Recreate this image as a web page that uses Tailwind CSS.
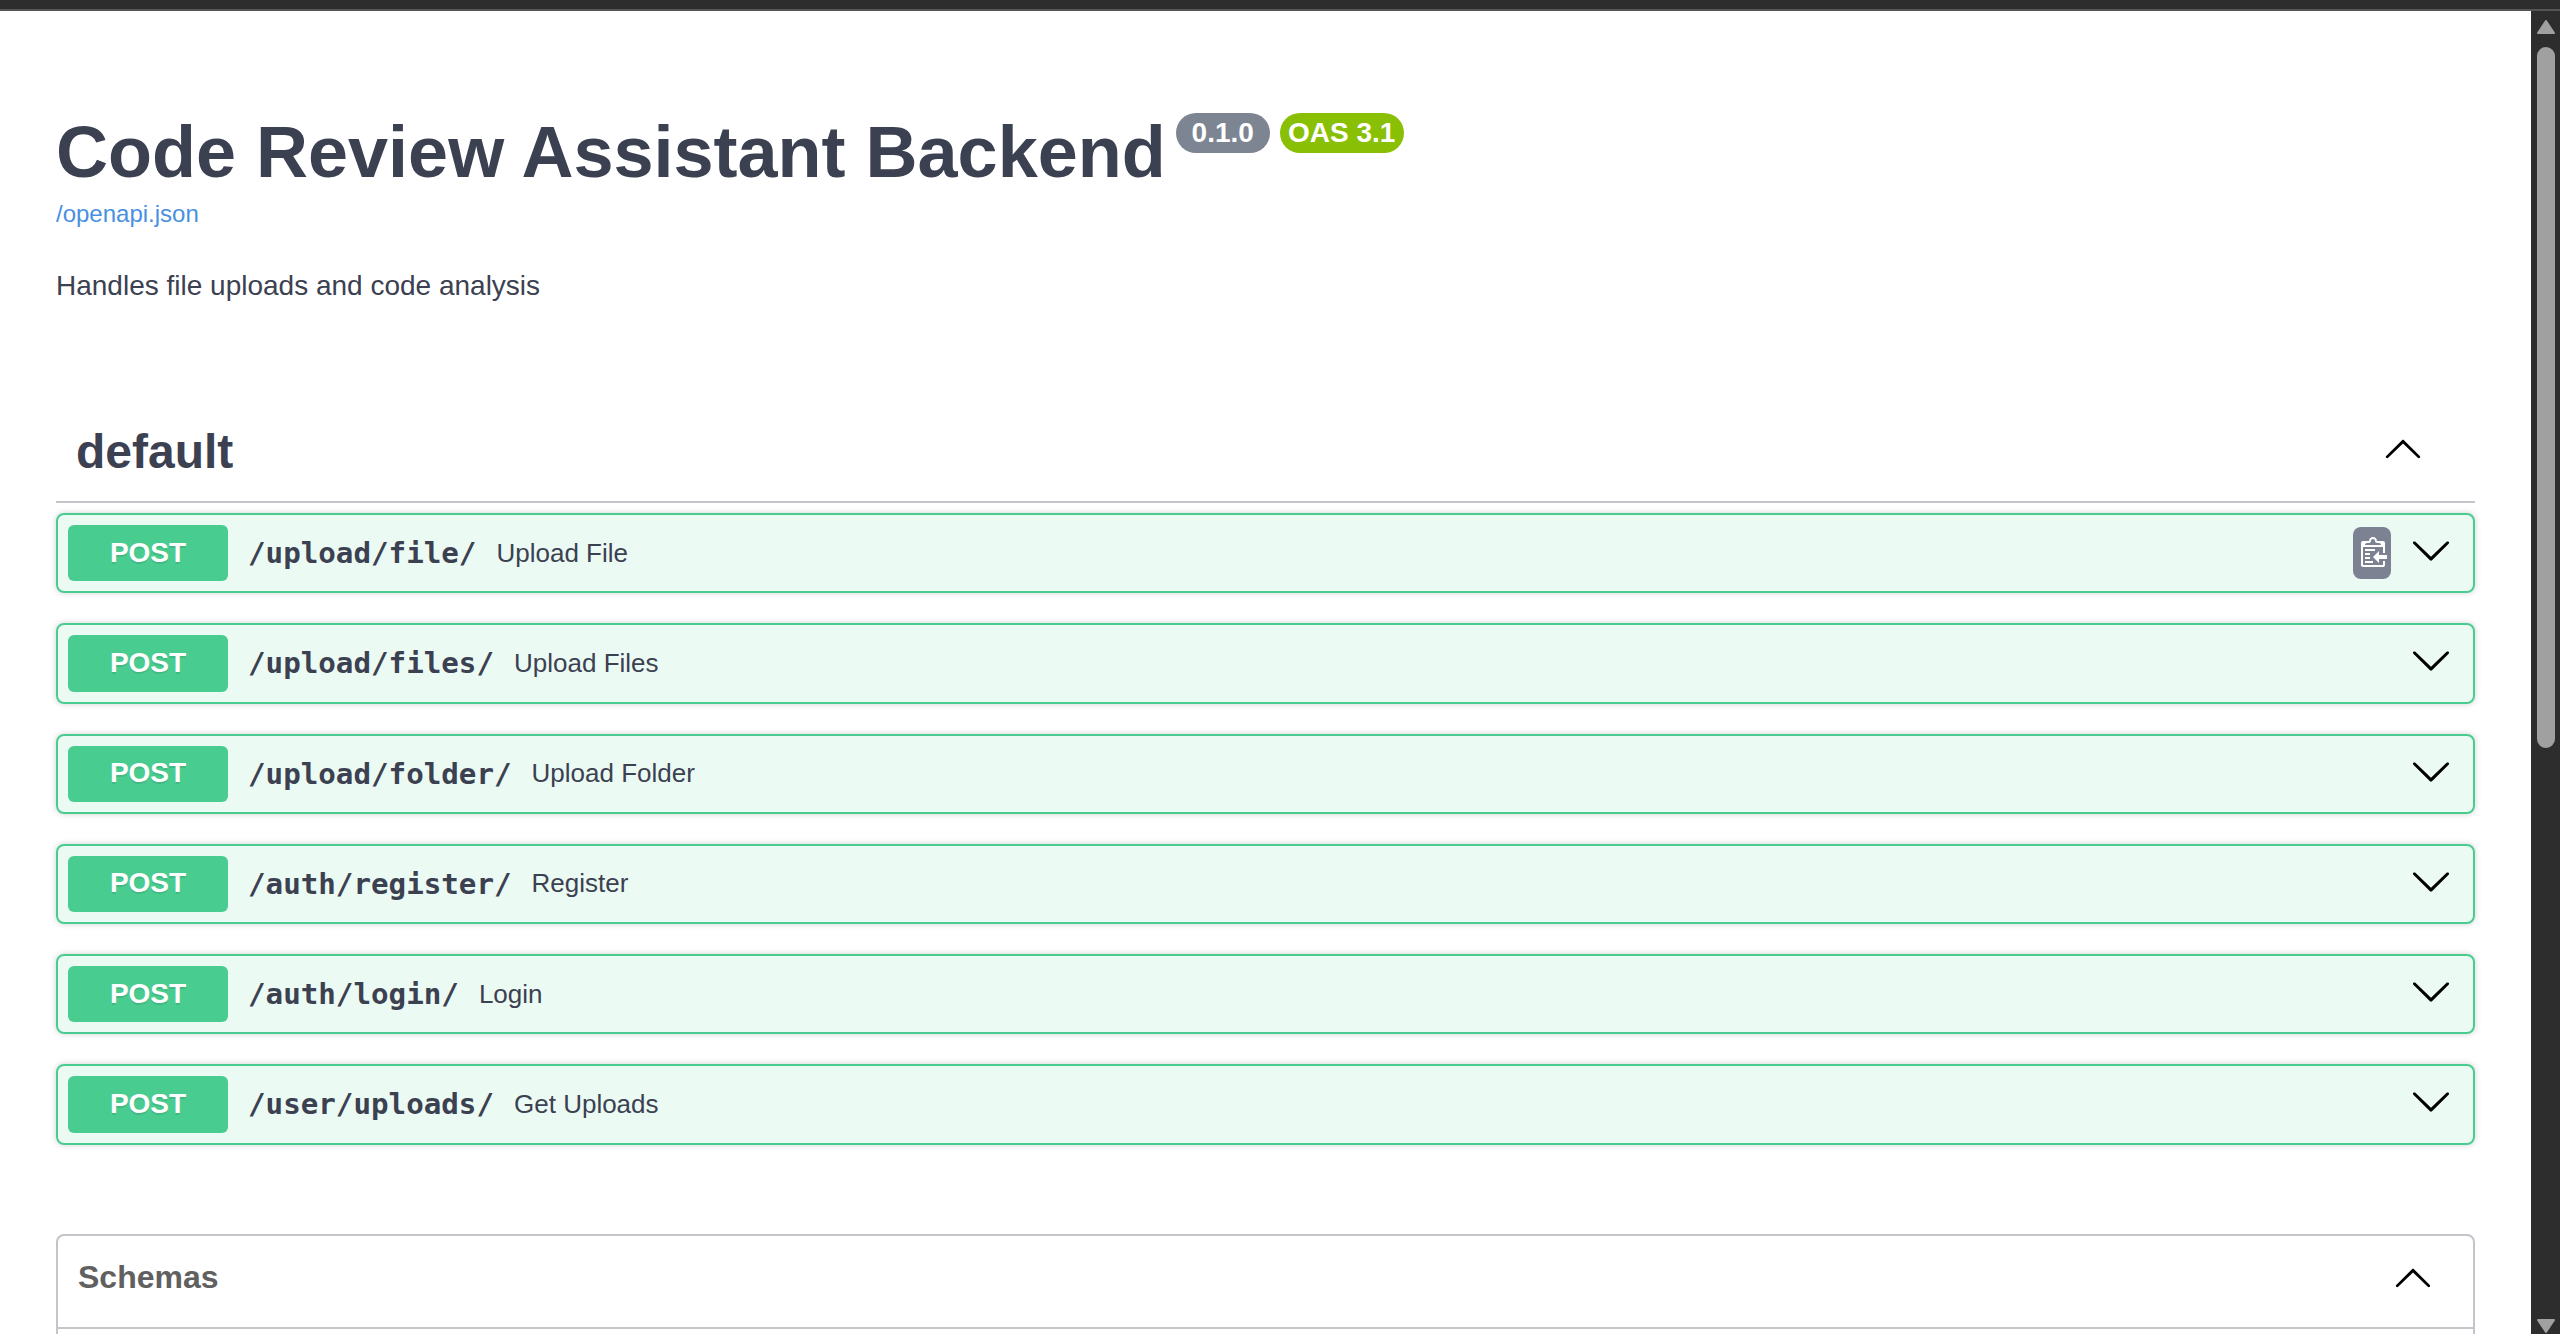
<!doctype html>
<html>
<head>
<meta charset="utf-8">
<script src="https://cdn.jsdelivr.net/npm/@tailwindcss/browser@4"></script>
<title>Code Review Assistant Backend</title>
</head>
<body class="h-[1334px] overflow-hidden bg-white font-['Liberation_Sans',sans-serif] text-[#3b4151]">
<div class="flex h-full flex-col">
  <div class="h-[9px] shrink-0 bg-[#2d2d2d]"></div>
  <div class="h-[2px] shrink-0 bg-[#555555]"></div>
  <div class="flex min-h-0 flex-1">
    <main class="min-w-0 flex-1 overflow-hidden pl-[56px] pr-[56px]">
      <div class="flex items-start pt-[96px]">
        <h1 class="text-[72px] leading-[90px] font-bold whitespace-nowrap">Code Review Assistant Backend</h1>
        <span class="ml-[10px] mt-[6px] flex h-[40px] w-[94px] items-center justify-center rounded-[20px] bg-[#7d8492] text-[28px] font-bold text-white">0.1.0</span>
        <span class="ml-[10px] mt-[6px] flex h-[40px] w-[124px] items-center justify-center rounded-[20px] bg-[#89bf04] text-[28px] font-bold text-white">OAS 3.1</span>
      </div>
      <a class="mt-[3px] block text-[24px] leading-[28px] text-[#4990e2]">/openapi.json</a>
      <p class="mt-[42px] text-[28px] leading-[32px]">Handles file uploads and code analysis</p>

      <div class="mt-[97px] flex h-[104px] items-center border-b-2 border-[#c4c5ca] pl-[20px]">
        <h3 class="pt-[3px] text-[48px] font-bold">default</h3>
        <svg class="ml-auto mr-[52px] h-[40px] w-[40px] -translate-y-[2px]" viewBox="0 0 20 20" fill="#000"><path d="M17.418 14.908c.272.268.709.268.979 0s.271-.701 0-.969l-7.908-7.83c-.27-.268-.707-.268-.979 0l-7.908 7.83c-.27.268-.27.701 0 .969.271.268.709.268.979 0L10 7.767l7.418 7.141z"/></svg>
      </div>

      <div class="mt-[10px] flex flex-col gap-[30px]">
        <div class="flex h-[80.25px] items-center rounded-[8px] border-2 border-[#49cc90] bg-[#49cc90]/10 px-[10px] shadow-[0_0_6px_rgba(0,0,0,0.19)]">
          <span class="flex h-[56.25px] w-[160px] shrink-0 items-center justify-center rounded-[6px] bg-[#49cc90] pb-[1px] text-[28px] font-bold text-white [text-shadow:0_2px_0_rgba(0,0,0,0.1)]">POST</span>
          <span class="ml-[20px] pt-[2px] font-['DejaVu_Sans_Mono',monospace] text-[29.2px] font-bold">/upload/file/</span>
          <span class="ml-[20px] text-[26px]">Upload File</span>
          <span class="ml-auto flex h-[52px] w-[38px] items-center justify-center rounded-[8px] bg-[#7d8293]">
            <svg class="h-[32px] w-[30px]" viewBox="0 0 15 16"><g transform="translate(2,-1)"><path fill="#ffffff" fill-rule="evenodd" d="M2 13h4v1H2v-1zm5-6H2v1h5V7zm2 3V8l-3 3 3 3v-2h5v-2H9zM4.5 9H2v1h2.5V9zM2 12h2.5v-1H2v1zm9 1h1v2c-.02.28-.11.52-.3.7-.19.18-.42.28-.7.3H1c-.55 0-1-.45-1-1V4c0-.55.45-1 1-1h3c0-1.11.89-2 2-2 1.11 0 2 .89 2 2h3c.55 0 1 .45 1 1v5h-1V6H1v9h10v-2zM2 5h8c0-.55-.45-1-1-1H8c-.55 0-1-.45-1-1s-.45-1-1-1-1 .45-1 1-.45 1-1 1H3c-.55 0-1 .45-1 1z"/></g></svg>
          </span>
          <svg class="ml-[19px] mr-[11px] h-[42px] w-[42px] -translate-y-[3px]" viewBox="0 0 20 20" fill="#000"><path d="M17.418 6.109c.272-.268.709-.268.979 0s.271.701 0 .969l-7.908 7.83c-.27.268-.707.268-.979 0l-7.908-7.83c-.27-.268-.27-.701 0-.969.271-.268.709-.268.979 0L10 13.25l7.418-7.141z"/></svg>
        </div>
        <div class="flex h-[80.25px] items-center rounded-[8px] border-2 border-[#49cc90] bg-[#49cc90]/10 px-[10px] shadow-[0_0_6px_rgba(0,0,0,0.19)]">
          <span class="flex h-[56.25px] w-[160px] shrink-0 items-center justify-center rounded-[6px] bg-[#49cc90] pb-[1px] text-[28px] font-bold text-white [text-shadow:0_2px_0_rgba(0,0,0,0.1)]">POST</span>
          <span class="ml-[20px] pt-[2px] font-['DejaVu_Sans_Mono',monospace] text-[29.2px] font-bold">/upload/files/</span>
          <span class="ml-[20px] text-[26px]">Upload Files</span>
          <svg class="ml-auto mr-[11px] h-[42px] w-[42px] -translate-y-[3px]" viewBox="0 0 20 20" fill="#000"><path d="M17.418 6.109c.272-.268.709-.268.979 0s.271.701 0 .969l-7.908 7.83c-.27.268-.707.268-.979 0l-7.908-7.83c-.27-.268-.27-.701 0-.969.271-.268.709-.268.979 0L10 13.25l7.418-7.141z"/></svg>
        </div>
        <div class="flex h-[80.25px] items-center rounded-[8px] border-2 border-[#49cc90] bg-[#49cc90]/10 px-[10px] shadow-[0_0_6px_rgba(0,0,0,0.19)]">
          <span class="flex h-[56.25px] w-[160px] shrink-0 items-center justify-center rounded-[6px] bg-[#49cc90] pb-[1px] text-[28px] font-bold text-white [text-shadow:0_2px_0_rgba(0,0,0,0.1)]">POST</span>
          <span class="ml-[20px] pt-[2px] font-['DejaVu_Sans_Mono',monospace] text-[29.2px] font-bold">/upload/folder/</span>
          <span class="ml-[20px] text-[26px]">Upload Folder</span>
          <svg class="ml-auto mr-[11px] h-[42px] w-[42px] -translate-y-[3px]" viewBox="0 0 20 20" fill="#000"><path d="M17.418 6.109c.272-.268.709-.268.979 0s.271.701 0 .969l-7.908 7.83c-.27.268-.707.268-.979 0l-7.908-7.83c-.27-.268-.27-.701 0-.969.271-.268.709-.268.979 0L10 13.25l7.418-7.141z"/></svg>
        </div>
        <div class="flex h-[80.25px] items-center rounded-[8px] border-2 border-[#49cc90] bg-[#49cc90]/10 px-[10px] shadow-[0_0_6px_rgba(0,0,0,0.19)]">
          <span class="flex h-[56.25px] w-[160px] shrink-0 items-center justify-center rounded-[6px] bg-[#49cc90] pb-[1px] text-[28px] font-bold text-white [text-shadow:0_2px_0_rgba(0,0,0,0.1)]">POST</span>
          <span class="ml-[20px] pt-[2px] font-['DejaVu_Sans_Mono',monospace] text-[29.2px] font-bold">/auth/register/</span>
          <span class="ml-[20px] text-[26px]">Register</span>
          <svg class="ml-auto mr-[11px] h-[42px] w-[42px] -translate-y-[3px]" viewBox="0 0 20 20" fill="#000"><path d="M17.418 6.109c.272-.268.709-.268.979 0s.271.701 0 .969l-7.908 7.83c-.27.268-.707.268-.979 0l-7.908-7.83c-.27-.268-.27-.701 0-.969.271-.268.709-.268.979 0L10 13.25l7.418-7.141z"/></svg>
        </div>
        <div class="flex h-[80.25px] items-center rounded-[8px] border-2 border-[#49cc90] bg-[#49cc90]/10 px-[10px] shadow-[0_0_6px_rgba(0,0,0,0.19)]">
          <span class="flex h-[56.25px] w-[160px] shrink-0 items-center justify-center rounded-[6px] bg-[#49cc90] pb-[1px] text-[28px] font-bold text-white [text-shadow:0_2px_0_rgba(0,0,0,0.1)]">POST</span>
          <span class="ml-[20px] pt-[2px] font-['DejaVu_Sans_Mono',monospace] text-[29.2px] font-bold">/auth/login/</span>
          <span class="ml-[20px] text-[26px]">Login</span>
          <svg class="ml-auto mr-[11px] h-[42px] w-[42px] -translate-y-[3px]" viewBox="0 0 20 20" fill="#000"><path d="M17.418 6.109c.272-.268.709-.268.979 0s.271.701 0 .969l-7.908 7.83c-.27.268-.707.268-.979 0l-7.908-7.83c-.27-.268-.27-.701 0-.969.271-.268.709-.268.979 0L10 13.25l7.418-7.141z"/></svg>
        </div>
        <div class="flex h-[80.25px] items-center rounded-[8px] border-2 border-[#49cc90] bg-[#49cc90]/10 px-[10px] shadow-[0_0_6px_rgba(0,0,0,0.19)]">
          <span class="flex h-[56.25px] w-[160px] shrink-0 items-center justify-center rounded-[6px] bg-[#49cc90] pb-[1px] text-[28px] font-bold text-white [text-shadow:0_2px_0_rgba(0,0,0,0.1)]">POST</span>
          <span class="ml-[20px] pt-[2px] font-['DejaVu_Sans_Mono',monospace] text-[29.2px] font-bold">/user/uploads/</span>
          <span class="ml-[20px] text-[26px]">Get Uploads</span>
          <svg class="ml-auto mr-[11px] h-[42px] w-[42px] -translate-y-[3px]" viewBox="0 0 20 20" fill="#000"><path d="M17.418 6.109c.272-.268.709-.268.979 0s.271.701 0 .969l-7.908 7.83c-.27.268-.707.268-.979 0l-7.908-7.83c-.27-.268-.27-.701 0-.969.271-.268.709-.268.979 0L10 13.25l7.418-7.141z"/></svg>
        </div>
      </div>

      <section class="mt-[89.5px] h-[200px] rounded-[8px] border-2 border-[#c4c5ca]">
        <div class="flex h-[93px] items-center border-b-2 border-[#c4c5ca] pb-[10px] pl-[20px] pr-[40px]">
          <h4 class="text-[32px] font-bold text-[#606060]">Schemas</h4>
          <svg class="ml-auto h-[40px] w-[40px]" viewBox="0 0 20 20" fill="#000"><path d="M17.418 14.908c.272.268.709.268.979 0s.271-.701 0-.969l-7.908-7.83c-.27-.268-.707-.268-.979 0l-7.908 7.83c-.27.268-.27.701 0 .969.271.268.709.268.979 0L10 7.767l7.418 7.141z"/></svg>
        </div>
      </section>
    </main>
    <aside class="flex w-[29px] shrink-0 flex-col items-center bg-[#2d2d2d]">
      <svg class="mt-[9px] h-[14px] w-[18px]" viewBox="0 0 18 14" fill="#a0a0a0"><path d="M9 1 17 13H1Z" stroke="#a0a0a0" stroke-width="2" stroke-linejoin="round"/></svg>
      <div class="mt-[13px] h-[701px] w-[18px] rounded-full bg-[#a0a0a0]"></div>
      <svg class="mt-auto mb-[1px] h-[14px] w-[18px]" viewBox="0 0 18 14" fill="#a0a0a0"><path d="M9 13 17 1H1Z" stroke="#a0a0a0" stroke-width="2" stroke-linejoin="round"/></svg>
    </aside>
  </div>
</div>
</body>
</html>
